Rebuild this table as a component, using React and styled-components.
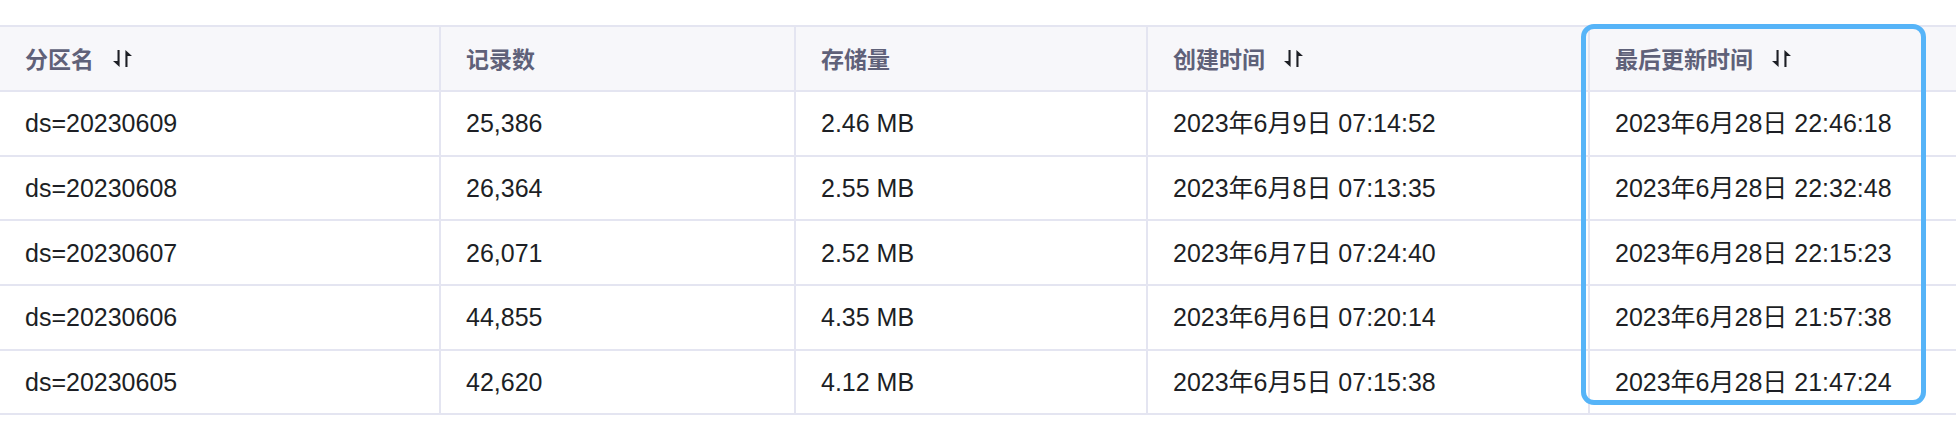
import React from 'react';
import styled, { createGlobalStyle } from 'styled-components';

const GlobalStyle = createGlobalStyle`
  body {
    margin: 0;
    background: #ffffff;
    font-family: "Liberation Sans", "Noto Sans CJK SC", sans-serif;
    overflow: hidden;
  }
`;

const columns = [
  { key: 'name', title: '分区名', sortable: true },
  { key: 'count', title: '记录数' },
  { key: 'size', title: '存储量' },
  { key: 'created', title: '创建时间', sortable: true },
  { key: 'updated', title: '最后更新时间', sortable: true },
];

const rows = [
  { name: 'ds=20230609', count: '25,386', size: '2.46 MB', created: '2023年6月9日 07:14:52', updated: '2023年6月28日 22:46:18' },
  { name: 'ds=20230608', count: '26,364', size: '2.55 MB', created: '2023年6月8日 07:13:35', updated: '2023年6月28日 22:32:48' },
  { name: 'ds=20230607', count: '26,071', size: '2.52 MB', created: '2023年6月7日 07:24:40', updated: '2023年6月28日 22:15:23' },
  { name: 'ds=20230606', count: '44,855', size: '4.35 MB', created: '2023年6月6日 07:20:14', updated: '2023年6月28日 21:57:38' },
  { name: 'ds=20230605', count: '42,620', size: '4.12 MB', created: '2023年6月5日 07:15:38', updated: '2023年6月28日 21:47:24' },
];

const Page = styled.div`
  padding-top: 25px;
  position: relative;
  width: 1956px;
  height: 399px;
  overflow: hidden;
`;

const Table = styled.div`
  width: 2100px;
  border-top: 2px solid #e4e5f1;
`;

const Row = styled.div`
  display: grid;
  grid-template-columns: 439px 355px 352px 442px 512px;
  height: ${(p) => (p.$header ? '63px' : '62.7px')};
  background: ${(p) => (p.$header ? '#f7f7fa' : '#ffffff')};
  border-bottom: 2px solid #e4e5f1;
`;

const Cell = styled.div`
  display: flex;
  align-items: center;
  padding-left: 25px;
  border-left: 2px solid #e4e5f1;
  white-space: nowrap;
  line-height: 1;

  &:first-child {
    border-left: none;
  }
`;

const HeadCell = styled(Cell)`
  font-family: "Noto Sans CJK SC", sans-serif;
  font-size: 23px;
  font-weight: 600;
  color: #5f6179;
  gap: 19px;
`;

const BodyCell = styled(Cell)`
  font-size: 25px;
  color: #1d1f25;
  padding-top: 1px;
`;

const Highlight = styled.div`
  position: absolute;
  left: 1581px;
  top: 24px;
  width: 345px;
  height: 381px;
  box-sizing: border-box;
  border: 5px solid #56b4f8;
  border-radius: 13px;
  pointer-events: none;
`;

const SortIcon = () => (
  <svg width="19" height="17" viewBox="0 0 19 17" fill="#1d1f25">
    <path d="M4.5 0 H6.6 V17 L0 11 H4.5 Z" />
    <path d="M12.4 17 V0 L19 6 H14.5 V17 Z" />
  </svg>
);

export default function App() {
  return (
    <Page>
      <GlobalStyle />
      <Table>
        <Row $header>
          {columns.map((col) => (
            <HeadCell key={col.key}>
              {col.title}
              {col.sortable && <SortIcon />}
            </HeadCell>
          ))}
        </Row>
        {rows.map((row) => (
          <Row key={row.name}>
            {columns.map((col) => (
              <BodyCell key={col.key}>{row[col.key]}</BodyCell>
            ))}
          </Row>
        ))}
      </Table>
      <Highlight />
    </Page>
  );
}
